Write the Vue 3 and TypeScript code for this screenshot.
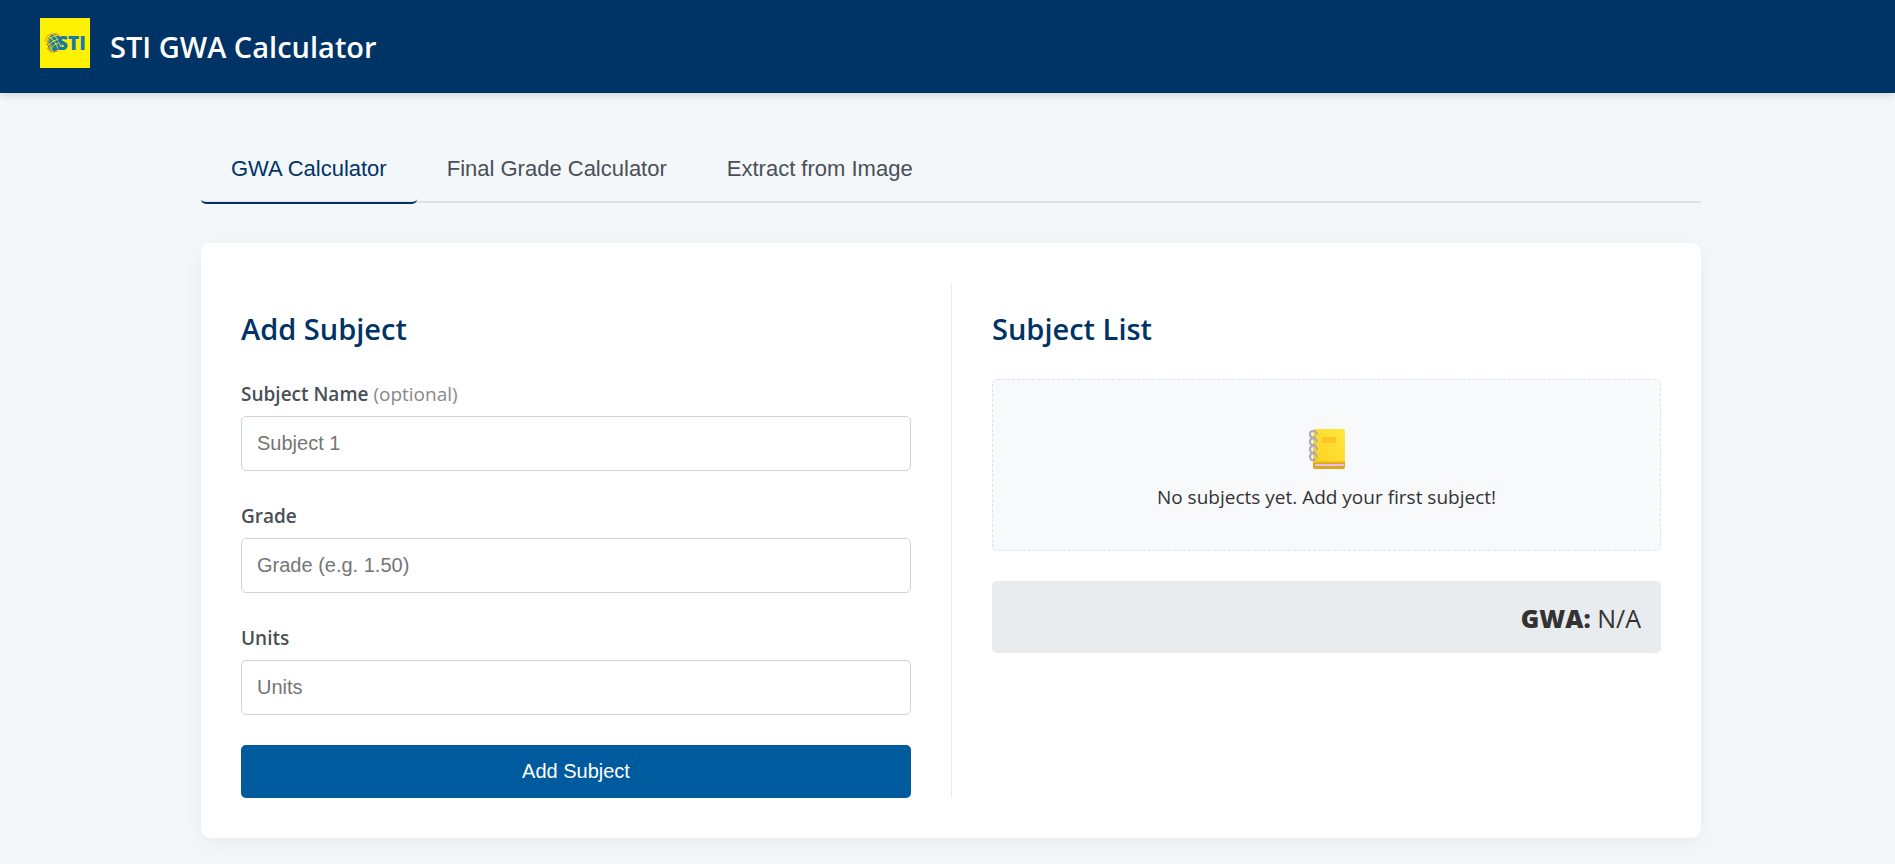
<script setup lang="ts">
import { computed, ref } from 'vue'

interface Subject {
  name: string
  grade: number
  units: number
}

const tabs = ['GWA Calculator', 'Final Grade Calculator', 'Extract from Image']
const activeTab = ref(0)

const name = ref('')
const grade = ref('')
const units = ref('')
const subjects = ref<Subject[]>([])

const namePlaceholder = computed(() => `Subject ${subjects.value.length + 1}`)

const gwa = computed(() => {
  const total = subjects.value.reduce((sum, s) => sum + s.units, 0)
  if (!total) return 'N/A'
  const weighted = subjects.value.reduce((sum, s) => sum + s.grade * s.units, 0)
  return (weighted / total).toFixed(2)
})

function addSubject() {
  const g = parseFloat(grade.value)
  const u = parseFloat(units.value)
  if (!(g > 0) || !(u > 0)) return
  subjects.value.push({ name: name.value || namePlaceholder.value, grade: g, units: u })
  name.value = ''
  grade.value = ''
  units.value = ''
}
</script>

<template>
  <div class="page">
    <header class="header">
      <svg class="logo" viewBox="0 0 50 50" role="img" aria-label="STI">
        <rect width="50" height="50" fill="#fff200" />
        <ellipse cx="14.500" cy="25" rx="7.500" ry="9" fill="#1878a8" />
        <g fill="none" stroke="#fff200" stroke-width="0.900">
          <path d="M8 18q8 5 11 15M12 15q7 6 9 15M5 23q6 3 8 12" />
          <path d="M5 26q5-8 14-9M6 30q6-9 16-9M9 33q5-8 13-9" />
        </g>
        <g fill="none" stroke="#f39a1f" stroke-width="1.200">
          <path d="M5 24q1-8 9-8.500q4 0 6 3M7 30l4 4q4 1 7-2M6 27l4-5M8 31l4-5" />
        </g>
        <text x="17" y="32" class="logo-text">STI</text>
      </svg>
      <h1 class="title">STI GWA Calculator</h1>
    </header>

    <main class="main">
      <div class="container">
        <nav class="tabs">
          <button
            v-for="(tab, i) in tabs"
            :key="tab"
            type="button"
            class="tab"
            :class="{ active: i === activeTab }"
            @click="activeTab = i"
          >{{ tab }}</button>
        </nav>

        <div class="card">
          <section class="column">
            <h2 class="heading">Add Subject</h2>
            <form @submit.prevent="addSubject">
              <div class="field">
                <label for="name">Subject Name <span class="optional">(optional)</span></label>
                <input id="name" v-model="name" type="text" :placeholder="namePlaceholder" />
              </div>
              <div class="field">
                <label for="grade">Grade</label>
                <input id="grade" v-model="grade" type="text" inputmode="decimal" placeholder="Grade (e.g. 1.50)" />
              </div>
              <div class="field">
                <label for="units">Units</label>
                <input id="units" v-model="units" type="text" inputmode="decimal" placeholder="Units" />
              </div>
              <button type="submit" class="submit">Add Subject</button>
            </form>
          </section>

          <section class="column">
            <h2 class="heading">Subject List</h2>
            <div class="list">
              <template v-if="!subjects.length">
                <svg class="notebook" viewBox="0 0 40 42" aria-hidden="true">
                  <defs>
                    <linearGradient id="cover" x1="0" y1="1" x2="1" y2="0">
                      <stop offset="0" stop-color="#fbd120" />
                      <stop offset="1" stop-color="#ffe83c" />
                    </linearGradient>
                  </defs>
                  <path d="M6 33h32v6q0 2-2 2H8q-2 0-2-2z" fill="#dda91c" />
                  <rect x="8" y="36" width="29" height="2" fill="#e6bfee" />
                  <path d="M6 3q0-2 2-2h28q2 0 2 2v31H8q-2 0-2 2z" fill="url(#cover)" />
                  <path d="M6 36q0-2 2-2h30" fill="none" stroke="#efb91c" />
                  <rect x="15" y="9" width="14" height="6" rx="1" fill="#fdc526" />
                  <g fill="none" stroke="#b3a9b8" stroke-width="2.200" stroke-linecap="round">
                    <path d="M10 6C9 2 3 2 3 6s3 4 5 3" />
                    <path d="M10 13.500C9 9.500 3 9.500 3 13.500s3 4 5 3" />
                    <path d="M10 21C9 17 3 17 3 21s3 4 5 3" />
                    <path d="M10 28.500C9 24.500 3 24.500 3 28.500s3 4 5 3" />
                  </g>
                </svg>
                <p class="empty">No subjects yet. Add your first subject!</p>
              </template>
              <ul v-else class="subjects">
                <li v-for="(s, i) in subjects" :key="i">{{ s.name }}: {{ s.grade.toFixed(2) }} × {{ s.units }}</li>
              </ul>
            </div>
            <div class="gwa"><strong>GWA:</strong> {{ gwa }}</div>
          </section>
        </div>
      </div>
    </main>
  </div>
</template>

<style>
body {
  background: #f3f7fa;
}
</style>

<style scoped>
.page {
  color: #333;
  font-family: 'Open Sans', 'Noto Sans', sans-serif;
  font-size: 19px;
  line-height: 30px;
}
.page * {
  box-sizing: border-box;
}
.header {
  display: flex;
  align-items: flex-start;
  gap: 20px;
  padding: 18px 40px 25px;
  background: #003366;
  box-shadow: 0 2px 8px rgba(0, 0, 0, 0.15);
}
.logo {
  display: block;
  width: 50px;
  height: 50px;
}
.logo-text {
  font: 800 19px 'Open Sans', sans-serif;
  fill: #1878a8;
}
.title {
  margin: 8px 0 0;
  color: #fff;
  font-size: 29px;
  font-weight: 600;
  line-height: 42px;
}
.main {
  padding: 40px 33px 40px 40px;
}
.container {
  max-width: 1500px;
  margin: 0 auto;
}
.tabs {
  display: flex;
  border-bottom: 2px solid #dde2e6;
}
.tab {
  margin-bottom: -3px;
  padding: 21px 30px 19px;
  border: 0;
  border-bottom: 2px solid transparent;
  border-radius: 5px;
  background: none;
  color: #495057;
  font: 22px/29px 'Liberation Sans', Arial, sans-serif;
  cursor: pointer;
}
.tab.active {
  border-bottom-color: #003366;
  color: #003366;
}
.card {
  display: grid;
  grid-template-columns: 1fr 1fr;
  margin-top: 40px;
  padding: 40px 0;
  border-radius: 10px;
  background: #fff;
  box-shadow: 0 5px 20px rgba(0, 0, 0, 0.05);
}
.column {
  padding: 25px 40px 0;
}
.column + .column {
  border-left: 1px solid #e9ecef;
}
.heading {
  margin: 0 0 30px;
  color: #003366;
  font-size: 29px;
  font-weight: 600;
  line-height: 41px;
}
.field {
  margin-bottom: 30px;
}
.field label {
  display: block;
  margin-bottom: 7px;
  color: #495057;
  font-weight: 600;
}
.optional {
  color: #888;
  font-weight: 400;
}
.field input {
  display: block;
  width: 100%;
  height: 55px;
  padding: 0 15px;
  border: 1px solid #ced4da;
  border-radius: 5px;
  background: #fff;
  color: #333;
  font: 20px 'Liberation Sans', Arial, sans-serif;
}
.field input::placeholder {
  color: #757575;
}
.submit {
  display: block;
  width: 100%;
  padding: 15px;
  border: 0;
  border-radius: 5px;
  background: #005a9e;
  color: #fff;
  font: 20px/23px 'Liberation Sans', Arial, sans-serif;
  cursor: pointer;
}
.list {
  display: flex;
  flex-direction: column;
  align-items: center;
  padding: 48px 20px 38px;
  border: 1px dashed #dee2e6;
  border-radius: 5px;
  background: #f8f9fb;
}
.notebook {
  width: 40px;
  height: 42px;
}
.empty {
  margin: 12px 0 0;
}
.subjects {
  margin: 0;
  padding: 0;
  list-style: none;
}
.gwa {
  margin-top: 30px;
  padding: 19px 20px 17px;
  border-radius: 5px;
  background: #e8ecef;
  font-size: 25px;
  line-height: 36px;
  text-align: right;
}
.gwa strong {
  font-weight: 800;
}
</style>
